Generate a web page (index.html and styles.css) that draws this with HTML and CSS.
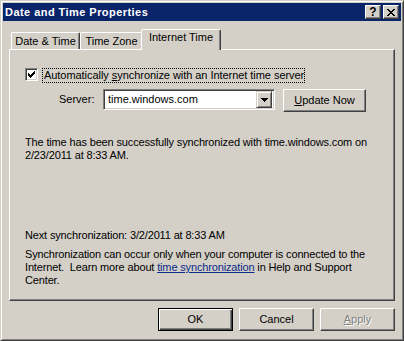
FILE: index.html
```html
<!DOCTYPE html>
<html>
<head>
    <title>Date and Time Properties</title>
    <link rel="stylesheet" href="styles.css">
</head>
<body>
    <div class="window">
        <div class="titlebar">
            <span class="title">Date and Time Properties</span>
            <div class="caption-btns">
                <span class="cap-btn help">?</span>
                <span class="cap-btn">
                    <svg width="8" height="7" viewBox="0 0 8 7"><path d="M0 0h2v1h-2zM6 0h2v1h-2zM1 1h2v1h-2zM5 1h2v1h-2zM2 2h4v1h-4zM3 3h2v1h-2zM2 4h4v1h-4zM1 5h2v1h-2zM5 5h2v1h-2zM0 6h2v1h-2zM6 6h2v1h-2z" fill="#000"/></svg>
                </span>
            </div>
        </div>

        <div class="content">
            <div class="tabs">
                <div class="tab tab-date">Date &amp; Time</div>
                <div class="tab tab-zone">Time Zone</div>
                <div class="tab active">Internet Time</div>
            </div>

            <div class="panel">
                <div class="check-row">
                    <span class="checkbox">
                        <svg width="11" height="11" viewBox="0 0 11 11"><path d="M2 4h1v3h-1zM3 5h1v3h-1zM4 6h1v3h-1zM5 5h1v3h-1zM6 4h1v3h-1zM7 3h1v3h-1zM8 2h1v3h-1z" fill="#000"/></svg>
                    </span>
                    <span class="check-label">Automatically <u>s</u>ynchronize with an Internet time server</span>
                </div>

                <div class="server-row">
                    <span class="server-label">Server:</span>
                    <div class="combo">
                        <span class="combo-text">time.windows.com</span>
                        <span class="combo-btn">
                            <svg width="7" height="4" viewBox="0 0 7 4"><path d="M0 0h7v1h-1v1h-1v1h-1v1h-1v-1h-1v-1h-1v-1h-1z" fill="#000"/></svg>
                        </span>
                    </div>
                    <span class="btn update-btn"><u>U</u>pdate Now</span>
                </div>

                <p class="status">The time has been successfully synchronized with time.windows.com on<br>2/23/2011 at 8:33 AM.</p>

                <p class="next">Next synchronization: 3/2/2011 at 8:33 AM</p>

                <p class="note">Synchronization can occur only when your computer is connected to the<br>Internet.&nbsp; Learn more about <a class="link" href="#">time synchronization</a> in Help and Support<br>Center.</p>
            </div>

            <div class="footer">
                <span class="btn default">OK</span>
                <span class="btn">Cancel</span>
                <span class="btn disabled"><u>A</u>pply</span>
            </div>
        </div>
    </div>
</body>
</html>
```

FILE: styles.css
```css
:root {
    --face: #d4d0c8;
    --light: #ffffff;
    --shadow: #808080;
    --dark: #404040;
    --caption: #0a246a;
}

* {
    box-sizing: border-box;
}

body {
    margin: 0;
    background: var(--face);
    font-family: 'Liberation Sans', Arial, sans-serif;
    font-size: 11px;
    line-height: 13px;
    color: #000;
}

.window {
    width: 404px;
    height: 341px;
    padding: 2px;
    background: var(--face);
    border: 1px solid;
    border-color: var(--face) var(--dark) var(--dark) var(--face);
    box-shadow: inset 1px 1px var(--light), inset -1px -1px var(--shadow);
}

.titlebar {
    height: 18px;
    background: var(--caption);
    display: flex;
    align-items: center;
    justify-content: space-between;
    padding: 0 2px 0 2px;
}

.title {
    color: #fff;
    font-weight: bold;
    font-size: 11px;
    letter-spacing: 0.45px;
    white-space: nowrap;
}

.caption-btns {
    display: flex;
    gap: 2px;
}

.cap-btn {
    width: 16px;
    height: 14px;
    display: flex;
    align-items: center;
    justify-content: center;
    background: var(--face);
    border: 1px solid;
    border-color: var(--light) var(--dark) var(--dark) var(--light);
    box-shadow: inset -1px -1px var(--shadow);
}

.cap-btn.help {
    font-weight: bold;
    font-size: 12px;
    line-height: 12px;
}

.content {
    padding: 8px 6px 0 6px;
}

.tabs {
    display: flex;
    align-items: flex-end;
    padding-left: 2px;
    height: 20px;
}

.tab {
    height: 17px;
    text-align: center;
    padding-top: 2px;
    white-space: nowrap;
    background: var(--face);
    border: 1px solid var(--light);
    border-bottom: none;
    border-right-color: var(--dark);
    border-radius: 2px 2px 0 0;
    box-shadow: inset -1px 0 var(--shadow);
}

.tab-date {
    width: 69px;
}

.tab-zone {
    width: 63px;
}

.tab.active {
    position: relative;
    width: 80px;
    height: 21px;
    margin: 0 -2px -1px -2px;
    padding-top: 1px;
    z-index: 1;
}

.panel {
    height: 252px;
    border: 1px solid;
    border-color: var(--light) var(--dark) var(--dark) var(--light);
    box-shadow: inset -1px -1px var(--shadow);
    padding: 17px 15px 0 15px;
}

.check-row {
    display: flex;
    align-items: center;
    height: 16px;
}

.checkbox {
    width: 13px;
    height: 13px;
    background: #fff;
    border: 1px solid;
    border-color: var(--shadow) var(--light) var(--light) var(--shadow);
    box-shadow: inset 1px 1px var(--dark), inset -1px -1px var(--face);
    margin-top: -2px;
}

.checkbox svg {
    display: block;
}

.check-label {
    margin-left: 4px;
    padding: 1px 1px 1px 2px;
    outline: 1px dotted #000;
    outline-offset: -1px;
    white-space: nowrap;
    letter-spacing: -0.05px;
}

.server-row {
    display: flex;
    align-items: flex-start;
    margin-top: 6px;
    padding-left: 34px;
}

.server-label {
    width: 44px;
    padding-top: 4px;
}

.combo {
    width: 172px;
    height: 21px;
    display: flex;
    align-items: center;
    background: #fff;
    border: 1px solid;
    border-color: var(--shadow) var(--light) var(--light) var(--shadow);
    box-shadow: inset 1px 1px var(--dark), inset -1px -1px var(--face);
    padding: 2px;
    margin-right: 8px;
}

.combo-text {
    flex: 1;
    padding-left: 2px;
}

.combo-btn {
    width: 16px;
    height: 17px;
    display: flex;
    align-items: center;
    justify-content: center;
    background: var(--face);
    border: 1px solid;
    border-color: var(--face) var(--dark) var(--dark) var(--face);
    box-shadow: inset 1px 1px var(--light), inset -1px -1px var(--shadow);
}

.btn {
    display: flex;
    align-items: center;
    justify-content: center;
    width: 75px;
    height: 23px;
    background: var(--face);
    border: 1px solid;
    border-color: var(--light) var(--dark) var(--dark) var(--light);
    box-shadow: inset -1px -1px var(--shadow);
    white-space: nowrap;
}

.update-btn {
    width: 83px;
}

.btn.default {
    border: 1px solid #000;
    box-shadow: inset 1px 1px var(--light), inset -1px -1px var(--dark), inset -2px -2px var(--shadow);
}

.btn.disabled {
    color: var(--shadow);
    text-shadow: 1px 1px var(--light);
}

.status,
.next,
.note {
    margin: 0;
    white-space: nowrap;
    letter-spacing: -0.15px;
}

.status {
    margin-top: 24px;
}

.next {
    margin-top: 67px;
}

.note {
    margin-top: 6px;
}

.link {
    color: #0b2a8a;
}

.footer {
    display: flex;
    justify-content: flex-end;
    gap: 6px;
    margin-top: 7px;
}
```
